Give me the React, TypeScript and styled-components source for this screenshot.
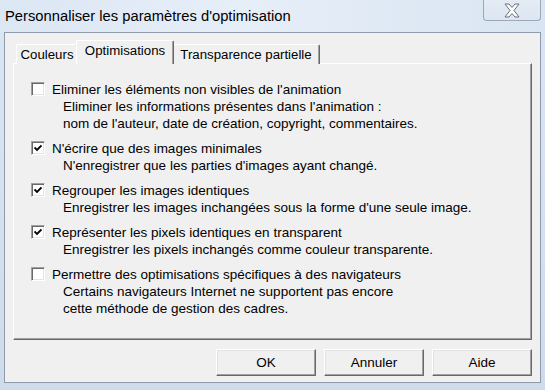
import React from "react";
import styled, { createGlobalStyle } from "styled-components";

const Global = createGlobalStyle`
  html, body { margin: 0; padding: 0; background: #d9e5f3; }
  * { box-sizing: border-box; }
`;

const Window = styled.div`
  width: 545px;
  height: 390px;
  display: flex;
  flex-direction: column;
  background: linear-gradient(180deg, #dae6f4 0%, #d3e0ef 60%, #cddbeb 100%);
  font-family: "Liberation Sans", Arial, sans-serif;
  color: #000;
  overflow: hidden;
`;

const TitleBar = styled.div`
  height: 32px;
  display: flex;
  align-items: flex-start;
  justify-content: space-between;
  padding-left: 5px;
  padding-right: 4px;
  background: linear-gradient(90deg, #dce7f4 0%, #e6eef8 45%, #d9e5f2 100%);
`;

const Title = styled.div`
  font-family: "Liberation Sans", Arial, sans-serif;
  font-size: 14.75px;
  line-height: 20px;
  padding-top: 6px;
  color: #000;
`;

const CloseButton = styled.div`
  width: 58px;
  height: 21px;
  border: 1px solid #9aa8b8;
  border-top: none;
  border-radius: 0 0 4px 4px;
  background: linear-gradient(180deg, #e3ebf5 0%, #dde6f1 100%);
  display: flex;
  align-items: center;
  justify-content: center;
`;

const Client = styled.div`
  flex: 1;
  margin: 0 4px 7px 4px;
  border: 1px solid #8d9bab;
  background: #f0f0f0;
  display: flex;
  flex-direction: column;
  padding: 7px 8px 0 8px;
`;

const TabStrip = styled.div`
  display: flex;
  align-items: flex-end;
  padding-left: 3px;
  height: 24px;
  position: relative;
  z-index: 1;
`;

const Tab = styled.div<{ $active?: boolean; $width: number }>`
  font-size: 13.25px;
  line-height: 16px;
  flex: none;
  width: ${(p) => p.$width + (p.$active ? 4 : 0)}px;
  height: ${(p) => (p.$active ? "24px" : "20px")};
  padding-top: 2px;
  margin: ${(p) => (p.$active ? "0 -2px 0 -2px" : "0")};
  text-align: center;
  background: #f0f0f0;
  border-top: 1px solid #ffffff;
  border-left: 1px solid #ffffff;
  border-right: 1px solid #696969;
  box-shadow: inset -1px 0 0 #a0a0a0;
  border-radius: 2px 2px 0 0;
  position: relative;
  z-index: ${(p) => (p.$active ? 2 : 1)};
  white-space: nowrap;
`;

const Panel = styled.div`
  height: 277px;
  margin-top: -1px;
  background: #f0f0f0;
  border-top: 1px solid #ffffff;
  border-left: 1px solid #ffffff;
  border-right: 1px solid #696969;
  border-bottom: 1px solid #696969;
  box-shadow: inset -1px -1px 0 #a0a0a0;
  padding: 17px 0 0 17px;
  display: flex;
  flex-direction: column;
  gap: 8px;
`;

const Option = styled.div`
  display: flex;
  align-items: flex-start;
  gap: 7px;
`;

const Box = styled.div<{ $checked?: boolean }>`
  width: 14px;
  height: 14px;
  margin-top: 1px;
  flex: none;
  background: #fff;
  border-top: 1px solid #a0a0a0;
  border-left: 1px solid #a0a0a0;
  border-right: 1px solid #ffffff;
  border-bottom: 1px solid #ffffff;
  box-shadow: inset 1px 1px 0 #696969, inset -1px -1px 0 #e3e3e3;
  display: flex;
  align-items: center;
  justify-content: center;
`;

const Texts = styled.div`
  display: flex;
  flex-direction: column;
  font-size: 13.5px;
  line-height: 17px;
`;

const Label = styled.div``;

const Detail = styled.div`
  padding-left: 11px;
`;

const ButtonRow = styled.div`
  display: flex;
  justify-content: flex-end;
  gap: 8px;
  margin-top: 9px;
`;

const Button = styled.div`
  width: 100px;
  height: 27px;
  font-size: 13.5px;
  display: flex;
  align-items: center;
  justify-content: center;
  background: #f0f0f0;
  border-top: 1px solid #ffffff;
  border-left: 1px solid #ffffff;
  border-right: 1px solid #696969;
  border-bottom: 1px solid #696969;
  box-shadow: inset -1px -1px 0 #a0a0a0, inset 1px 1px 0 #e3e3e3;
`;

const Check = () => (
  <svg width="8" height="8" viewBox="0 0 8 8">
    <path d="M0.5 3.5 L3 6 L7.5 1.5" stroke="#000" strokeWidth="1.8" fill="none" />
  </svg>
);

const CloseX = () => (
  <svg width="20" height="15" viewBox="0 0 20 15">
    <path
      d="M3 1 L7 1 L10 4.5 L13 1 L17 1 L12 7.5 L17 14 L13 14 L10 10.5 L7 14 L3 14 L8 7.5 Z"
      fill="#ffffff"
      stroke="#6b6f75"
      strokeWidth="1"
      strokeLinejoin="round"
    />
  </svg>
);

const tabs = [
  { label: "Couleurs", width: 62, active: false },
  { label: "Optimisations", width: 94, active: true },
  { label: "Transparence partielle", width: 148, active: false },
];

const options: { checked: boolean; label: string; details: string[] }[] = [
  {
    checked: false,
    label: "Eliminer les éléments non visibles de l'animation",
    details: [
      "Eliminer les informations présentes dans l'animation :",
      "nom de l'auteur, date de création, copyright, commentaires.",
    ],
  },
  {
    checked: true,
    label: "N'écrire que des images minimales",
    details: ["N'enregistrer que les parties d'images ayant changé."],
  },
  {
    checked: true,
    label: "Regrouper les images identiques",
    details: ["Enregistrer les images inchangées sous la forme d'une seule image."],
  },
  {
    checked: true,
    label: "Représenter les pixels identiques en transparent",
    details: ["Enregistrer les pixels inchangés comme couleur transparente."],
  },
  {
    checked: false,
    label: "Permettre des optimisations spécifiques à des navigateurs",
    details: [
      "Certains navigateurs Internet ne supportent pas encore",
      "cette méthode de gestion des cadres.",
    ],
  },
];

export default function App() {
  return (
    <>
      <Global />
      <Window>
        <TitleBar>
          <Title>Personnaliser les paramètres d'optimisation</Title>
          <CloseButton>
            <CloseX />
          </CloseButton>
        </TitleBar>
        <Client>
          <TabStrip>
            {tabs.map((t) => (
              <Tab key={t.label} $active={t.active} $width={t.width}>
                {t.label}
              </Tab>
            ))}
          </TabStrip>
          <Panel>
            {options.map((o) => (
              <Option key={o.label}>
                <Box $checked={o.checked}>{o.checked && <Check />}</Box>
                <Texts>
                  <Label>{o.label}</Label>
                  {o.details.map((d) => (
                    <Detail key={d}>{d}</Detail>
                  ))}
                </Texts>
              </Option>
            ))}
          </Panel>
          <ButtonRow>
            <Button>OK</Button>
            <Button>Annuler</Button>
            <Button>Aide</Button>
          </ButtonRow>
        </Client>
      </Window>
    </>
  );
}
